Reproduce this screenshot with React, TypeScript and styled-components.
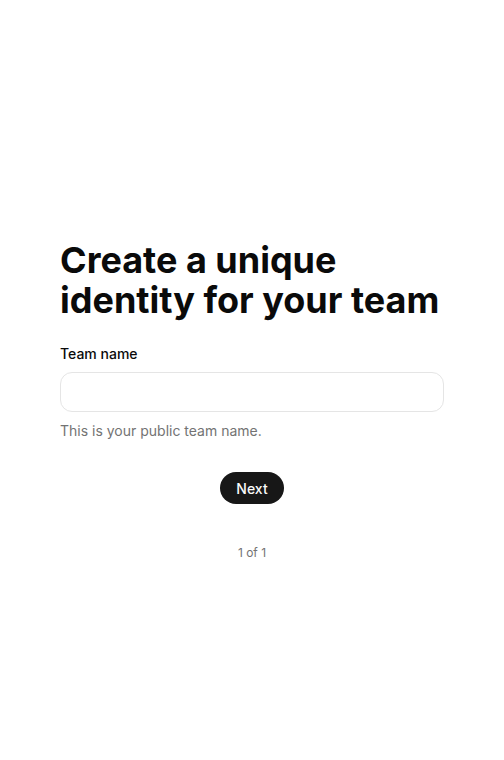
import React from "react";
import styled, { createGlobalStyle } from "styled-components";

const Global = createGlobalStyle`
  html, body { margin: 0; padding: 0; background: #ffffff; }
  body { font-family: Inter, "Noto Sans", sans-serif; color: #0a0a0a; -webkit-font-smoothing: antialiased; }
  * { box-sizing: border-box; }
`;

const Page = styled.main`
  min-height: 760px;
  padding: 240px 60px 0;
  display: flex;
  flex-direction: column;
`;

const Title = styled.h1`
  margin: 0;
  font-size: 36px;
  line-height: 40px;
  font-weight: 700;
  letter-spacing: 0;
  color: #0a0a0a;
`;

const Field = styled.div`
  margin-top: 24px;
  display: flex;
  flex-direction: column;
`;

const Label = styled.label`
  font-size: 14px;
  line-height: 20px;
  font-weight: 500;
  color: #0a0a0a;
`;

const Input = styled.input`
  margin-top: 8px;
  height: 40px;
  width: 100%;
  border: 1px solid #e5e5e5;
  border-radius: 12px;
  padding: 0 12px;
  font-family: inherit;
  font-size: 14px;
  outline: none;
  background: #fff;
`;

const Help = styled.p`
  margin: 9px 0 0;
  font-size: 14px;
  line-height: 20px;
  color: #737373;
`;

const Actions = styled.div`
  margin-top: 31px;
  display: flex;
  justify-content: center;
`;

const Button = styled.button`
  height: 32px;
  padding: 0 16px;
  border: none;
  border-radius: 16px;
  background: #171717;
  color: #fafafa;
  font-family: inherit;
  font-size: 14px;
  font-weight: 500;
  cursor: pointer;
`;

const Step = styled.p`
  margin: 41px 0 0;
  text-align: center;
  font-size: 12px;
  line-height: 16px;
  color: #737373;
`;

export default function App() {
  return (
    <>
      <Global />
      <Page>
        <Title>Create a unique identity for your team</Title>
        <Field>
          <Label htmlFor="team">Team name</Label>
          <Input id="team" />
          <Help>This is your public team name.</Help>
        </Field>
        <Actions>
          <Button>Next</Button>
        </Actions>
        <Step>1 of 1</Step>
      </Page>
    </>
  );
}
